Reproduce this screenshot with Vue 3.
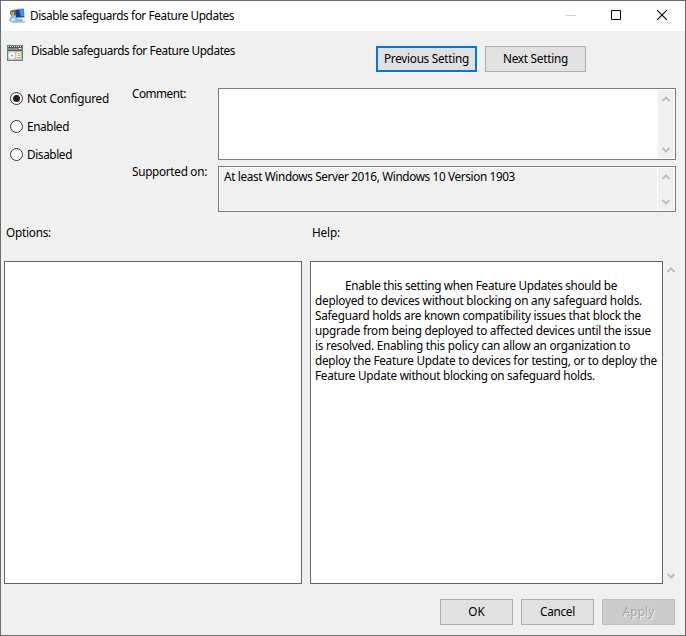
<script setup>
import { ref, h } from 'vue'

// Spreads or tightens the letters of a label so that it takes the given width.
const vFit = {
  mounted(el, { value }) {
    const natural = el.getBoundingClientRect().width
    el.style.letterSpacing = (value - natural) / el.textContent.length + 'px'
  },
}

const states = [
  { label: 'Not Configured', width: 82 },
  { label: 'Enabled', width: 42 },
  { label: 'Disabled', width: 45 },
]
const selected = ref('Not Configured')

const help = [
  { text: 'Enable this setting when Feature Updates should be', width: 272, indent: true },
  { text: 'deployed to devices without blocking on any safeguard holds.', width: 327 },
  { text: 'Safeguard holds are known compatibility issues that block the', width: 326 },
  { text: 'upgrade from being deployed to affected devices until the issue', width: 336 },
  { text: 'is resolved. Enabling this policy can allow an organization to', width: 315 },
  { text: 'deploy the Feature Update to devices for testing, or to deploy the', width: 342 },
  { text: 'Feature Update without blocking on safeguard holds.', width: 280 },
]

const Chevron = (props) =>
  h('svg', { width: 8, height: 6, viewBox: '0 0 8 6' }, [
    h('path', {
      d: props.down ? 'M0.5 1L4 4.5L7.5 1' : 'M0.5 5L4 1.5L7.5 5',
      fill: 'none',
      stroke: '#bfbfbf',
      'stroke-width': 2.1,
    }),
  ])
Chevron.props = { down: Boolean }
</script>

<template>
  <div class="window">
    <header class="titlebar">
      <svg class="app-icon" width="16" height="16" viewBox="0 0 16 16">
        <path d="M5 1L15 0L16 10L6 11Z" fill="#b9c7d4" />
        <path d="M6 2L14.5 1L15 9L7 9.5Z" fill="#0b3fa8" />
        <path d="M10 1.6L14.5 1L15 8L12 8.5Z" fill="#4a90ec" />
        <path d="M8 11H14V13H16V15H7Z" fill="#c3c9ce" />
        <path d="M9 12H13V13H9Z" fill="#8297aa" />
        <circle cx="4" cy="5" r="3" fill="#526b62" />
        <path d="M2 4H5V8H3Z" fill="#d9a95b" />
        <path d="M1 9L4 7.5L8 10L9 14L5 15L0 13Z" fill="#82bce4" />
        <path d="M3 10L6 10L6 13L2 13Z" fill="#c7e7f7" />
      </svg>
      <span v-fit="204" class="title">Disable safeguards for Feature Updates</span>
      <div class="controls">
        <svg width="10" height="10" viewBox="0 0 10 10"><path d="M0 5.5H10" stroke="#ccc" /></svg>
        <svg width="10" height="10" viewBox="0 0 10 10"><path d="M.5 .5H9.5V9.5H.5Z" fill="none" stroke="#000" /></svg>
        <svg width="10" height="10" viewBox="0 0 10 10"><path d="M0 0L10 10M10 0L0 10" stroke="#000" stroke-width="1.1" /></svg>
      </div>
    </header>

    <section class="heading">
      <svg class="policy-icon" width="16" height="16" viewBox="0 0 16 16">
        <path d="M0 0H16V16H0Z" fill="#5d8583" />
        <path d="M1 1H15V15H1Z" fill="#555" />
        <path d="M1 1.5H15" stroke="#d8e6e6" stroke-dasharray="1 1" />
        <path d="M1 3H15V5H1Z" fill="#8a8a8a" />
        <path d="M12 3H14V4H12Z" fill="#eee" />
        <path d="M1 6H15V15H1Z" fill="#c9c9c2" />
        <circle cx="5" cy="10.5" r="3.9" fill="#fafafa" stroke="#a0a0a0" stroke-width=".5" />
        <circle cx="5" cy="10.5" r=".9" fill="#8a8a8a" />
        <path d="M9.5 6.5H14V14H8V11.5Z" fill="#fff8d0" stroke="#888" stroke-width=".5" />
        <path d="M10.5 8.5H13M10.5 10.5H13M9.5 12.5H13" stroke="#bdb48c" />
      </svg>
      <span v-fit="204" class="name">Disable safeguards for Feature Updates</span>
      <div class="nav">
        <button class="button focused"><span v-fit="85">Previous Setting</span></button>
        <button class="button"><span v-fit="65">Next Setting</span></button>
      </div>
    </section>

    <section class="fields">
      <div class="states">
        <label v-for="s in states" :key="s.label" class="state" @click="selected = s.label">
          <svg width="13" height="13" viewBox="0 0 13 13">
            <circle cx="6.5" cy="6.5" r="6" fill="#fff" stroke="#333" />
            <circle v-if="selected === s.label" cx="6.5" cy="6.5" r="3.5" fill="#2b1a2b" />
          </svg>
          <span v-fit="s.width">{{ s.label }}</span>
        </label>
      </div>
      <div class="labels">
        <div class="comment-label"><span v-fit="54">Comment:</span></div>
        <div><span v-fit="75">Supported on:</span></div>
      </div>
      <div class="boxes">
        <div class="box comment">
          <div class="value"></div>
          <div class="scroll"><Chevron /><Chevron down /></div>
        </div>
        <div class="box supported">
          <div class="value"><span v-fit="291">At least Windows Server 2016, Windows 10 Version 1903</span></div>
          <div class="scroll"><Chevron /><Chevron down /></div>
        </div>
      </div>
    </section>

    <section class="captions">
      <div class="options-caption"><span v-fit="45">Options:</span></div>
      <div><span v-fit="28">Help:</span></div>
    </section>

    <section class="panels">
      <div class="panel options"></div>
      <div class="panel help">
        <div v-for="line in help" :key="line.text" :class="{ indent: line.indent }">
          <span v-fit="line.width">{{ line.text }}</span>
        </div>
      </div>
      <div class="scroll"><Chevron /><Chevron down /></div>
    </section>

    <footer class="footer">
      <button class="button"><span v-fit="16.5">OK</span></button>
      <button class="button"><span v-fit="35">Cancel</span></button>
      <button class="button" disabled><span v-fit="32">Apply</span></button>
    </footer>
  </div>
</template>

<style>
body {
  margin: 0;
  overflow: hidden;
}
</style>

<style scoped>
.window {
  box-sizing: border-box;
  width: 686px;
  height: 636px;
  border: 1px solid #6d6a6e;
  background: #f0f0f0;
  display: flex;
  flex-direction: column;
  font: 11.75px/15px "Noto Sans", "Open Sans", sans-serif;
  color: #000;
  cursor: default;
}
svg {
  display: block;
  flex: none;
}
span {
  display: block;
  width: max-content;
  white-space: nowrap;
}
.titlebar {
  display: flex;
  align-items: flex-start;
  height: 30px;
  background: #fff;
}
.app-icon {
  margin: 7px 5px 0 8px;
}
.title {
  margin-top: 7px;
}
.controls {
  display: flex;
  gap: 36px;
  margin: 9px 18px 0 auto;
}
.controls svg:nth-child(2) {
  margin-left: -1px;
}
.heading {
  display: flex;
  align-items: flex-start;
  height: 57px;
}
.policy-icon {
  margin: 14px 8px 0 6px;
}
.name {
  margin-top: 12px;
}
.nav {
  display: flex;
  gap: 8px;
  margin: 15px 99px 0 auto;
}
.button {
  box-sizing: border-box;
  width: 73px;
  height: 26px;
  padding: 0 0 1px;
  border: 1px solid #adadad;
  border-radius: 0;
  background: #e1e1e1;
  display: flex;
  align-items: center;
  justify-content: center;
  font: inherit;
  color: #000;
}
.nav .button {
  width: 101px;
}
.button.focused {
  border: 2px solid #0078d7;
}
.button:disabled {
  background: #ccc;
  border-color: #bfbfbf;
  color: #a0a5a5;
  text-shadow: 1px 1px 0 #f2f2f2;
}
.fields {
  display: flex;
  height: 137px;
}
.states {
  display: flex;
  flex-direction: column;
  gap: 13px;
  width: 122px;
  padding: 3px 0 0 9px;
  box-sizing: border-box;
}
.state {
  display: flex;
  gap: 4px;
}
.state svg {
  margin-top: 1px;
}
.labels {
  width: 86px;
  padding-left: 9px;
  box-sizing: border-box;
  margin-top: -2px;
}
.comment-label {
  height: 78px;
}
.boxes {
  display: flex;
  flex-direction: column;
  gap: 6px;
  width: 458px;
  margin-left: 9px;
}
.box {
  box-sizing: border-box;
  display: flex;
  gap: 1px;
  padding: 1px;
  border: 1px solid #7a7a7a;
  background: #fff;
}
.comment {
  height: 72px;
}
.supported {
  height: 46px;
}
.value {
  flex: 1;
  padding: 1px 4px;
}
.supported .value {
  background: #f0f0f0;
}
.scroll {
  display: flex;
  flex-direction: column;
  justify-content: space-between;
  align-items: center;
  box-sizing: border-box;
  width: 16px;
  padding: 6px 0 5px;
  background: #f0f0f0;
}
.captions {
  display: flex;
  height: 36px;
  padding-left: 5px;
}
.options-caption {
  width: 306px;
}
.panels {
  display: flex;
  height: 323px;
  padding-left: 3px;
}
.panel {
  box-sizing: border-box;
  border: 1px solid #646464;
  background: #fff;
}
.options {
  width: 298px;
  margin-right: 8px;
}
.help {
  width: 353px;
  padding: 16px 0 0 4px;
}
.help div {
  height: 15px;
}
.indent {
  padding-left: 30px;
}
.footer {
  display: flex;
  justify-content: flex-end;
  gap: 8px;
  padding: 15px 10px 0 0;
}
</style>
